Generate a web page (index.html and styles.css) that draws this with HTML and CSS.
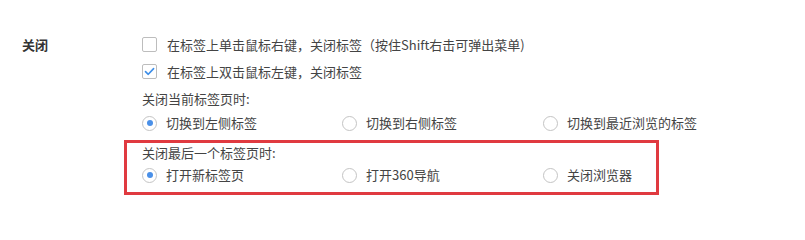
FILE: index.html
```html
<!DOCTYPE html>
<html lang="zh-CN">
<head>
<meta charset="utf-8">
<title>关闭</title>
<link rel="stylesheet" href="styles.css">
</head>
<body>
<div class="section">
  <div class="section-label">关闭</div>
  <div class="options">
    <div class="row">
      <span class="checkbox"></span>
      <span class="text">在标签上单击鼠标右键，关闭标签（按住Shift右击可弹出菜单)</span>
    </div>
    <div class="row">
      <span class="checkbox checked">
        <svg viewBox="0 0 15 15" width="15" height="15"><path d="M3.5 7.6 L6.3 10.3 L11.6 4.6" fill="none" stroke="#3d8ee8" stroke-width="1.6" stroke-linecap="round" stroke-linejoin="round"/></svg>
      </span>
      <span class="text">在标签上双击鼠标左键，关闭标签</span>
    </div>
    <div class="heading h1">关闭当前标签页时:</div>
    <div class="radios">
      <div class="radio-item"><span class="radio on"></span><span class="text">切换到左侧标签</span></div>
      <div class="radio-item"><span class="radio"></span><span class="text">切换到右侧标签</span></div>
      <div class="radio-item"><span class="radio"></span><span class="text">切换到最近浏览的标签</span></div>
    </div>
    <div class="highlight">
      <div class="heading h2">关闭最后一个标签页时:</div>
      <div class="radios r2">
        <div class="radio-item"><span class="radio on"></span><span class="text">打开新标签页</span></div>
        <div class="radio-item"><span class="radio"></span><span class="text">打开360导航</span></div>
        <div class="radio-item"><span class="radio"></span><span class="text">关闭浏览器</span></div>
      </div>
    </div>
  </div>
</div>
</body>
</html>
```
FILE: styles.css
```css
html, body {
  margin: 0;
  padding: 0;
  background: #ffffff;
}
body {
  font-family: "Noto Sans CJK SC", "Noto Sans", sans-serif;
  font-size: 13px;
  color: #444444;
}
.section {
  display: flex;
  padding: 31px 0 0 22px;
}
.section-label {
  width: 120px;
  flex: none;
  font-weight: bold;
  line-height: 27px;
  height: 27px;
  color: #333333;
}
.options {
  display: flex;
  flex-direction: column;
}
.row {
  display: flex;
  align-items: center;
  height: 27px;
}
.checkbox {
  box-sizing: border-box;
  width: 15px;
  height: 15px;
  border: 1px solid #bdbdbd;
  border-radius: 2px;
  background: #fff;
  margin-right: 10px;
  flex: none;
  position: relative;
}
.checkbox svg {
  position: absolute;
  left: -1px;
  top: -1px;
}
.text {
  white-space: nowrap;
  line-height: 20px;
}
.heading {
  display: flex;
  align-items: center;
}
.heading.h1 {
  height: 26px;
}
.radios {
  display: grid;
  grid-template-columns: 200px 201px auto;
  height: 24px;
  align-items: center;
}
.radios.r2 {
  margin-top: 1px;
}
.radio-item {
  display: flex;
  align-items: center;
}
.radio {
  box-sizing: border-box;
  width: 15px;
  height: 15px;
  border: 1px solid #c4c4c4;
  border-radius: 50%;
  background: #fff;
  margin-right: 9px;
  flex: none;
  display: flex;
  align-items: center;
  justify-content: center;
}
.radio.on::after {
  content: "";
  width: 6px;
  height: 6px;
  border-radius: 50%;
  background: #4a90e8;
}
.highlight {
  box-sizing: border-box;
  margin: 5px 0 0 -18px;
  width: 535px;
  border: 3px solid #e03a40;
  padding: 0 0 5px 15px;
}
.heading.h2 {
  height: 19px;
}
```
